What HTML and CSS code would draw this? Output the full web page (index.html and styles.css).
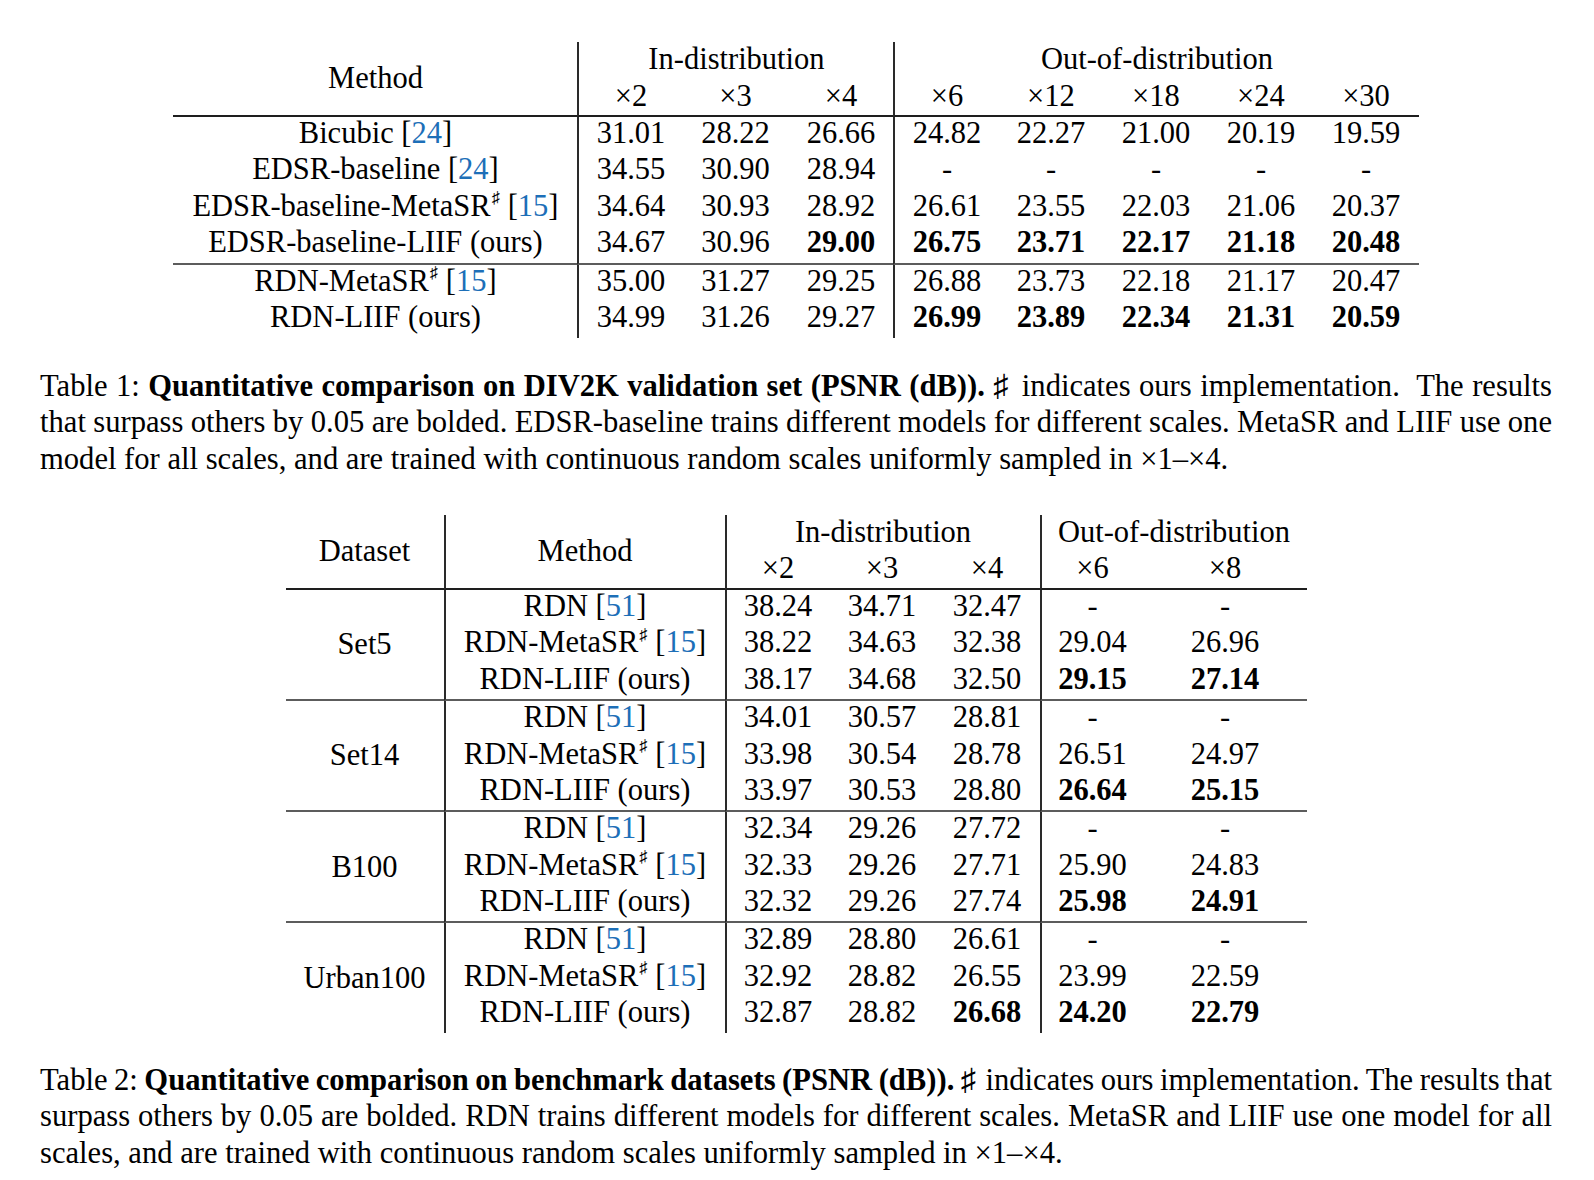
FILE: index.html
```html
<!DOCTYPE html>
<html lang="en">
<head>
<meta charset="utf-8">
<title>LIIF results</title>
<link rel="stylesheet" href="styles.css">
</head>
<body>
<div class="page">
  <table class="res t1">
    <colgroup>
      <col class="w-method1">
      <col class="w-105"><col class="w-106"><col class="w-105">
      <col class="w-105"><col class="w-105"><col class="w-105"><col class="w-105"><col class="w-105">
    </colgroup>
    <thead>
      <tr class="hr1">
        <th rowspan="2" class="rule-top">Method</th>
        <th colspan="3" class="vl">In-distribution</th>
        <th colspan="5" class="vl">Out-of-distribution</th>
      </tr>
      <tr class="hr2">
        <th class="vl rule-top">×2</th><th class="rule-top">×3</th><th class="rule-top">×4</th>
        <th class="vl rule-top">×6</th><th class="rule-top">×12</th><th class="rule-top">×18</th><th class="rule-top">×24</th><th class="rule-top">×30</th>
      </tr>
    </thead>
    <tbody>
      <tr>
        <td>Bicubic [<span class="cite">24</span>]</td>
        <td class="vl">31.01</td><td>28.22</td><td>26.66</td>
        <td class="vl">24.82</td><td>22.27</td><td>21.00</td><td>20.19</td><td>19.59</td>
      </tr>
      <tr>
        <td>EDSR-baseline [<span class="cite">24</span>]</td>
        <td class="vl">34.55</td><td>30.90</td><td>28.94</td>
        <td class="vl">-</td><td>-</td><td>-</td><td>-</td><td>-</td>
      </tr>
      <tr>
        <td>EDSR-baseline-MetaSR<sup class="sharp">♯</sup> [<span class="cite">15</span>]</td>
        <td class="vl">34.64</td><td>30.93</td><td>28.92</td>
        <td class="vl">26.61</td><td>23.55</td><td>22.03</td><td>21.06</td><td>20.37</td>
      </tr>
      <tr class="mid">
        <td>EDSR-baseline-LIIF (ours)</td>
        <td class="vl">34.67</td><td>30.96</td><td class="b">29.00</td>
        <td class="vl b">26.75</td><td class="b">23.71</td><td class="b">22.17</td><td class="b">21.18</td><td class="b">20.48</td>
      </tr>
      <tr>
        <td>RDN-MetaSR<sup class="sharp">♯</sup> [<span class="cite">15</span>]</td>
        <td class="vl">35.00</td><td>31.27</td><td>29.25</td>
        <td class="vl">26.88</td><td>23.73</td><td>22.18</td><td>21.17</td><td>20.47</td>
      </tr>
      <tr>
        <td>RDN-LIIF (ours)</td>
        <td class="vl">34.99</td><td>31.26</td><td>29.27</td>
        <td class="vl b">26.99</td><td class="b">23.89</td><td class="b">22.34</td><td class="b">21.31</td><td class="b">20.59</td>
      </tr>
    </tbody>
  </table>

  <p class="caption cap1">
    <span class="line">Table 1: <b>Quantitative comparison on DIV2K validation set (PSNR (dB)).</b> ♯ indicates ours implementation.&nbsp; The results</span>
    <span class="line">that surpass others by 0.05 are bolded. EDSR-baseline trains different models for different scales. MetaSR and LIIF use one</span>
    <span class="line last">model for all scales, and are trained with continuous random scales uniformly sampled in ×1–×4.</span>
  </p>

  <table class="res t2">
    <colgroup>
      <col class="w-dataset"><col class="w-method2">
      <col class="w-105"><col class="w-105"><col class="w-105">
      <col class="w-104"><col class="w-163">
    </colgroup>
    <thead>
      <tr class="hr1">
        <th rowspan="2" class="rule-top">Dataset</th>
        <th rowspan="2" class="vl rule-top">Method</th>
        <th colspan="3" class="vl">In-distribution</th>
        <th colspan="2" class="vl">Out-of-distribution</th>
      </tr>
      <tr class="hr2">
        <th class="vl rule-top">×2</th><th class="rule-top">×3</th><th class="rule-top">×4</th>
        <th class="vl rule-top">×6</th><th class="rule-top">×8</th>
      </tr>
    </thead>
    <tbody>
      <tr>
        <td rowspan="3" class="grp">Set5</td>
        <td class="vl">RDN [<span class="cite">51</span>]</td>
        <td class="vl">38.24</td><td>34.71</td><td>32.47</td>
        <td class="vl">-</td><td>-</td>
      </tr>
      <tr>
        <td class="vl">RDN-MetaSR<sup class="sharp">♯</sup> [<span class="cite">15</span>]</td>
        <td class="vl">38.22</td><td>34.63</td><td>32.38</td>
        <td class="vl">29.04</td><td>26.96</td>
      </tr>
      <tr class="mid">
        <td class="vl">RDN-LIIF (ours)</td>
        <td class="vl">38.17</td><td>34.68</td><td>32.50</td>
        <td class="vl b">29.15</td><td class="b">27.14</td>
      </tr>

      <tr>
        <td rowspan="3" class="grp">Set14</td>
        <td class="vl">RDN [<span class="cite">51</span>]</td>
        <td class="vl">34.01</td><td>30.57</td><td>28.81</td>
        <td class="vl">-</td><td>-</td>
      </tr>
      <tr>
        <td class="vl">RDN-MetaSR<sup class="sharp">♯</sup> [<span class="cite">15</span>]</td>
        <td class="vl">33.98</td><td>30.54</td><td>28.78</td>
        <td class="vl">26.51</td><td>24.97</td>
      </tr>
      <tr class="mid">
        <td class="vl">RDN-LIIF (ours)</td>
        <td class="vl">33.97</td><td>30.53</td><td>28.80</td>
        <td class="vl b">26.64</td><td class="b">25.15</td>
      </tr>

      <tr>
        <td rowspan="3" class="grp">B100</td>
        <td class="vl">RDN [<span class="cite">51</span>]</td>
        <td class="vl">32.34</td><td>29.26</td><td>27.72</td>
        <td class="vl">-</td><td>-</td>
      </tr>
      <tr>
        <td class="vl">RDN-MetaSR<sup class="sharp">♯</sup> [<span class="cite">15</span>]</td>
        <td class="vl">32.33</td><td>29.26</td><td>27.71</td>
        <td class="vl">25.90</td><td>24.83</td>
      </tr>
      <tr class="mid">
        <td class="vl">RDN-LIIF (ours)</td>
        <td class="vl">32.32</td><td>29.26</td><td>27.74</td>
        <td class="vl b">25.98</td><td class="b">24.91</td>
      </tr>

      <tr>
        <td rowspan="3" class="grp last-grp">Urban100</td>
        <td class="vl">RDN [<span class="cite">51</span>]</td>
        <td class="vl">32.89</td><td>28.80</td><td>26.61</td>
        <td class="vl">-</td><td>-</td>
      </tr>
      <tr>
        <td class="vl">RDN-MetaSR<sup class="sharp">♯</sup> [<span class="cite">15</span>]</td>
        <td class="vl">32.92</td><td>28.82</td><td>26.55</td>
        <td class="vl">23.99</td><td>22.59</td>
      </tr>
      <tr>
        <td class="vl">RDN-LIIF (ours)</td>
        <td class="vl">32.87</td><td>28.82</td><td class="b">26.68</td>
        <td class="vl b">24.20</td><td class="b">22.79</td>
      </tr>
    </tbody>
  </table>

  <p class="caption cap2">
    <span class="line">Table 2: <b>Quantitative comparison on benchmark datasets (PSNR (dB)).</b> ♯ indicates ours implementation. The results that</span>
    <span class="line">surpass others by 0.05 are bolded. RDN trains different models for different scales. MetaSR and LIIF use one model for all</span>
    <span class="line last">scales, and are trained with continuous random scales uniformly sampled in ×1–×4.</span>
  </p>
</div>
</body>
</html>
```

FILE: styles.css
```css
html, body {
  margin: 0;
  padding: 0;
  background: #ffffff;
}

body {
  color: #000000;
  font-family: "Liberation Serif", "Times New Roman", "DejaVu Serif", serif;
}

.page {
  width: 1512px;
  padding: 42px 42px 0 40px;
}

/* ---------- tables ---------- */
.res {
  border-collapse: separate;
  border-spacing: 0;
  table-layout: fixed;
  margin: 0 auto;
  font-size: 30.5px;
}

.t1 { width: 1245px; }
.t2 { width: 1021px; margin-top: 37.5px; }

.w-method1 { width: 404px; }
.w-dataset { width: 158px; }
.w-method2 { width: 281px; }
.w-104 { width: 104px; }
.w-105 { width: 105px; }
.w-106 { width: 106px; }
.w-163 { width: 163px; }

.res th,
.res td {
  padding: 1px 0 5.1px 0;
  line-height: 30.5px;
  text-align: center;
  vertical-align: top;
  font-weight: normal;
  white-space: nowrap;
}

.t2 td { padding: 1px 0 4.9px 0; }

.res .hr1 th { padding: 2px 0 4.5px 0; }
.t1 .hr2 th { padding: 2px 0 3px 0; }
.t2 .hr2 th { padding: 1px 0 4.5px 0; }

.res th[rowspan],
.res td[rowspan] {
  vertical-align: middle;
  padding: 0;
}

.res .rule-top { border-bottom: 2px solid #1e1e1e; }

.res .mid td { border-bottom: 2px solid #5c5c5c; }
.res td.grp { border-bottom: 2px solid #5c5c5c; }
.res td.last-grp { border-bottom: 0; }

.res .vl { border-left: 2px solid #2a2a2a; }

.res .b { font-weight: bold; }

.cite { color: #1d6fb8; }

.sharp {
  font-size: 0.55em;
  line-height: 0;
  vertical-align: 0.75em;
  margin-left: 1px;
}

/* ---------- captions ---------- */
.caption {
  margin: 29.6px 0 0 0;
  font-size: 30.6px;
  line-height: 36.6px;
}

.cap2 { margin-top: 29.2px; }

.caption .line {
  display: block;
  white-space: nowrap;
  word-spacing: -4px;
  text-align: justify;
  text-align-last: justify;
}

.caption .line.last {
  word-spacing: normal;
  text-align: left;
  text-align-last: left;
}
```
